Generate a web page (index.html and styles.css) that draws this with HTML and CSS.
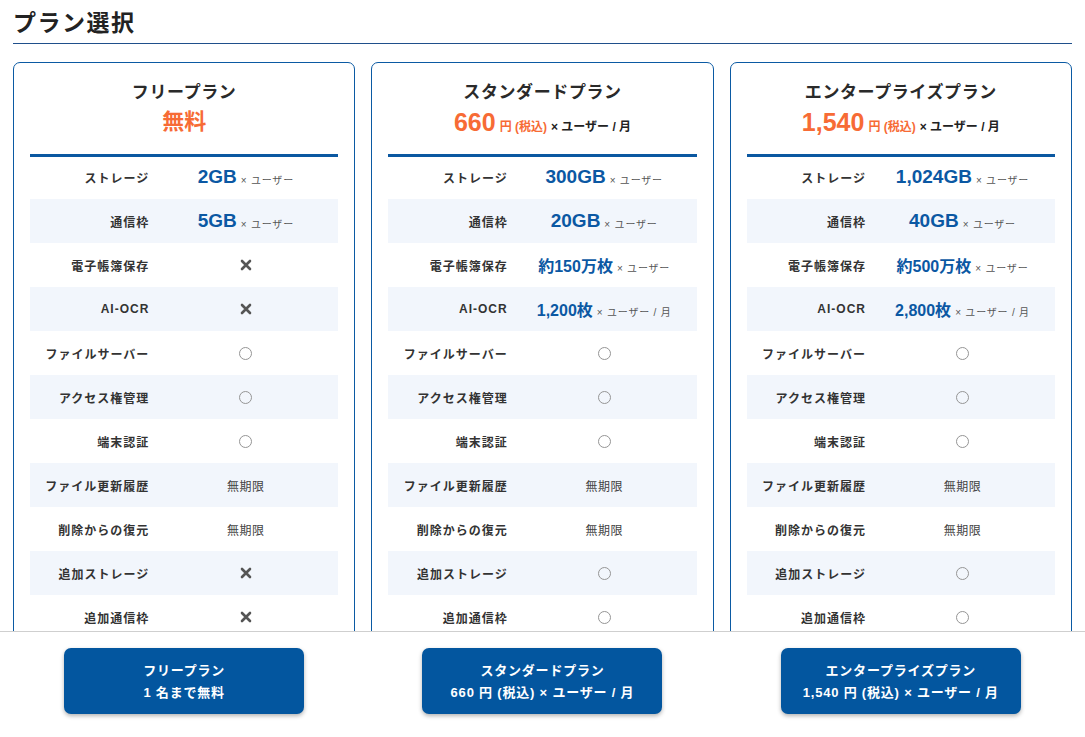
FILE: index.html
```html
<!DOCTYPE html>
<html lang="ja">
<head>
<meta charset="utf-8">
<title>プラン選択</title>
<link rel="stylesheet" href="styles.css">
</head>
<body>
<main class="main">
  <h1 class="page-title">プラン選択</h1>
  <div class="plans">
    <section class="card">
      <div class="card-head">
        <div class="plan-name">フリープラン</div>
        <div class="plan-price"><span class="free">無料</span></div>
      </div>
      <div class="rows">
        <div class="row"><div class="label">ストレージ</div><div class="val"><span class="big">2GB</span><span class="unit">× ユーザー</span></div></div>
        <div class="row"><div class="label">通信枠</div><div class="val"><span class="big">5GB</span><span class="unit">× ユーザー</span></div></div>
        <div class="row"><div class="label">電子帳簿保存</div><div class="val"><svg class="cross" width="12" height="12" viewBox="0 0 12 12"><path d="M2 2L10 10M10 2L2 10"/></svg></div></div>
        <div class="row"><div class="label">AI-OCR</div><div class="val"><svg class="cross" width="12" height="12" viewBox="0 0 12 12"><path d="M2 2L10 10M10 2L2 10"/></svg></div></div>
        <div class="row"><div class="label">ファイルサーバー</div><div class="val"><span class="ok"></span></div></div>
        <div class="row"><div class="label">アクセス権管理</div><div class="val"><span class="ok"></span></div></div>
        <div class="row"><div class="label">端末認証</div><div class="val"><span class="ok"></span></div></div>
        <div class="row"><div class="label">ファイル更新履歴</div><div class="val"><span class="txt">無期限</span></div></div>
        <div class="row"><div class="label">削除からの復元</div><div class="val"><span class="txt">無期限</span></div></div>
        <div class="row"><div class="label">追加ストレージ</div><div class="val"><svg class="cross" width="12" height="12" viewBox="0 0 12 12"><path d="M2 2L10 10M10 2L2 10"/></svg></div></div>
        <div class="row"><div class="label">追加通信枠</div><div class="val"><svg class="cross" width="12" height="12" viewBox="0 0 12 12"><path d="M2 2L10 10M10 2L2 10"/></svg></div></div>
      </div>
    </section>

    <section class="card">
      <div class="card-head">
        <div class="plan-name">スタンダードプラン</div>
        <div class="plan-price"><span class="num">660</span><span class="yen">円 (税込)</span><span class="per">× ユーザー / 月</span></div>
      </div>
      <div class="rows">
        <div class="row"><div class="label">ストレージ</div><div class="val"><span class="big">300GB</span><span class="unit">× ユーザー</span></div></div>
        <div class="row"><div class="label">通信枠</div><div class="val"><span class="big">20GB</span><span class="unit">× ユーザー</span></div></div>
        <div class="row"><div class="label">電子帳簿保存</div><div class="val"><span class="mid">約150万枚</span><span class="unit">× ユーザー</span></div></div>
        <div class="row"><div class="label">AI-OCR</div><div class="val"><span class="mid">1,200枚</span><span class="unit">× ユーザー / 月</span></div></div>
        <div class="row"><div class="label">ファイルサーバー</div><div class="val"><span class="ok"></span></div></div>
        <div class="row"><div class="label">アクセス権管理</div><div class="val"><span class="ok"></span></div></div>
        <div class="row"><div class="label">端末認証</div><div class="val"><span class="ok"></span></div></div>
        <div class="row"><div class="label">ファイル更新履歴</div><div class="val"><span class="txt">無期限</span></div></div>
        <div class="row"><div class="label">削除からの復元</div><div class="val"><span class="txt">無期限</span></div></div>
        <div class="row"><div class="label">追加ストレージ</div><div class="val"><span class="ok"></span></div></div>
        <div class="row"><div class="label">追加通信枠</div><div class="val"><span class="ok"></span></div></div>
      </div>
    </section>

    <section class="card">
      <div class="card-head">
        <div class="plan-name">エンタープライズプラン</div>
        <div class="plan-price"><span class="num">1,540</span><span class="yen">円 (税込)</span><span class="per">× ユーザー / 月</span></div>
      </div>
      <div class="rows">
        <div class="row"><div class="label">ストレージ</div><div class="val"><span class="big">1,024GB</span><span class="unit">× ユーザー</span></div></div>
        <div class="row"><div class="label">通信枠</div><div class="val"><span class="big">40GB</span><span class="unit">× ユーザー</span></div></div>
        <div class="row"><div class="label">電子帳簿保存</div><div class="val"><span class="mid">約500万枚</span><span class="unit">× ユーザー</span></div></div>
        <div class="row"><div class="label">AI-OCR</div><div class="val"><span class="mid">2,800枚</span><span class="unit">× ユーザー / 月</span></div></div>
        <div class="row"><div class="label">ファイルサーバー</div><div class="val"><span class="ok"></span></div></div>
        <div class="row"><div class="label">アクセス権管理</div><div class="val"><span class="ok"></span></div></div>
        <div class="row"><div class="label">端末認証</div><div class="val"><span class="ok"></span></div></div>
        <div class="row"><div class="label">ファイル更新履歴</div><div class="val"><span class="txt">無期限</span></div></div>
        <div class="row"><div class="label">削除からの復元</div><div class="val"><span class="txt">無期限</span></div></div>
        <div class="row"><div class="label">追加ストレージ</div><div class="val"><span class="ok"></span></div></div>
        <div class="row"><div class="label">追加通信枠</div><div class="val"><span class="ok"></span></div></div>
      </div>
    </section>
  </div>
</main>
<footer class="bar">
  <div class="bar-cell"><a class="cta" href="#free"><span class="cta-line">フリープラン</span><span class="cta-line">1 名まで無料</span></a></div>
  <div class="bar-cell"><a class="cta" href="#standard"><span class="cta-line">スタンダードプラン</span><span class="cta-line">660 円 (税込) × ユーザー / 月</span></a></div>
  <div class="bar-cell"><a class="cta" href="#enterprise"><span class="cta-line">エンタープライズプラン</span><span class="cta-line">1,540 円 (税込) × ユーザー / 月</span></a></div>
</footer>
</body>
</html>
```
FILE: styles.css
```css
* { box-sizing: border-box; }
html, body { height: 100%; }
body {
  margin: 0;
  height: 100vh;
  overflow: hidden;
  display: flex;
  flex-direction: column;
  background: #fff;
  color: #222;
  font-family: "Liberation Sans", "Noto Sans CJK JP", sans-serif;
}
.main {
  flex: 1;
  min-height: 0;
  overflow: hidden;
  padding: 0 13px;
}
.page-title {
  margin: 0 0 18px;
  padding: 8px 0 5px;
  font-size: 23px;
  line-height: 30px;
  font-weight: 700;
  letter-spacing: 1.5px;
  color: #222;
  border-bottom: 1px solid #1f4f8b;
}
.plans {
  display: grid;
  grid-template-columns: repeat(3, 1fr);
  gap: 16px;
  align-items: start;
}
.card {
  border: 1px solid #0b5aa3;
  border-radius: 7px;
  padding: 0 16px;
  background: #fff;
}
.card-head {
  padding: 18px 0 16px;
  border-bottom: 3px solid #0b58a1;
  text-align: center;
}
.plan-name {
  font-size: 17px;
  line-height: 24px;
  font-weight: 700;
  letter-spacing: 0.6px;
  color: #2a2a2a;
}
.plan-price {
  margin-top: 1px;
  height: 32px;
  display: flex;
  justify-content: center;
  align-items: baseline;
  line-height: 32px;
}
.free {
  font-size: 22px;
  font-weight: 700;
  color: #f76b35;
}
.num {
  font-size: 25px;
  font-weight: 700;
  color: #f76b35;
}
.yen {
  margin-left: 4px;
  font-size: 12px;
  font-weight: 700;
  color: #f76b35;
}
.per {
  margin-left: 4px;
  font-size: 12px;
  font-weight: 700;
  color: #222;
}
.rows { margin-top: -2px; }
.row {
  display: grid;
  grid-template-columns: 40% 60%;
  height: 44px;
  align-items: center;
}
.row:nth-child(even) { background: #f2f6fc; }
.label {
  text-align: right;
  padding-right: 4px;
  font-size: 12px;
  font-weight: 700;
  letter-spacing: 1px;
  color: #333;
}
.val {
  display: flex;
  justify-content: center;
  align-items: center;
}
.big {
  font-size: 19px;
  font-weight: 700;
  color: #0b58a3;
}
.mid {
  font-size: 16px;
  font-weight: 700;
  color: #0b58a3;
}
.unit {
  margin-left: 4px;
  margin-top: 4px;
  font-size: 10px;
  letter-spacing: 0.8px;
  color: #555;
}
.txt {
  font-size: 12px;
  letter-spacing: 0.5px;
  color: #444;
}
.cross {
  display: block;
  fill: none;
  stroke: #555;
  stroke-width: 2.6;
  stroke-linecap: round;
}
.ok {
  display: block;
  width: 13px;
  height: 13px;
  border: 1px solid #959595;
  border-radius: 50%;
}
.bar {
  flex: none;
  display: grid;
  grid-template-columns: repeat(3, 1fr);
  gap: 16px;
  padding: 16px 13px 23px;
  border-top: 1px solid #cfcfcf;
  background: #fff;
}
.bar-cell {
  display: flex;
  justify-content: center;
}
.cta {
  width: 240px;
  height: 66px;
  border-radius: 7px;
  background: #03569f;
  color: #fff;
  text-decoration: none;
  box-shadow: 0 2px 4px rgba(0, 0, 0, 0.3);
  display: flex;
  flex-direction: column;
  justify-content: center;
  align-items: center;
  font-size: 13px;
  font-weight: 700;
  letter-spacing: 0.8px;
  padding-top: 1px;
}
.cta-line {
  display: block;
  line-height: 22px;
  white-space: nowrap;
}
```
